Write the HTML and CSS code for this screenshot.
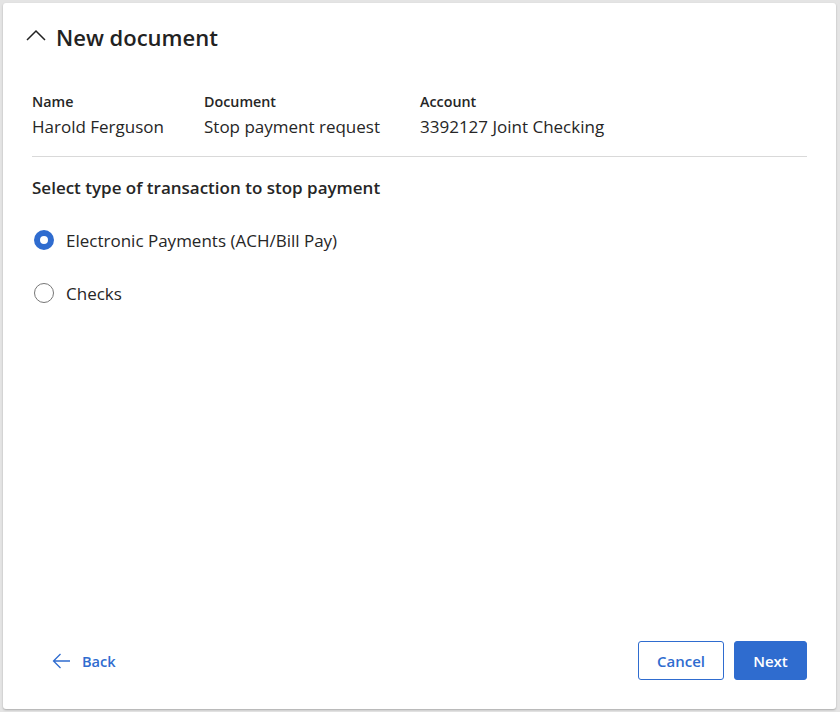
FILE: index.html
```html
<!DOCTYPE html>
<html>
<head>
<meta charset="utf-8">
<link rel="stylesheet" href="styles.css">
</head>
<body>
<div class="card">
  <div class="header">
    <svg class="chev" width="20" height="12" viewBox="0 0 20 12"><path d="M1 11 L10 2 L19 11" fill="none" stroke="#222" stroke-width="1.5"/></svg>
    <h1 class="title">New document</h1>
  </div>
  <div class="meta">
    <div class="col col-name">
      <div class="label">Name</div>
      <div class="value">Harold Ferguson</div>
    </div>
    <div class="col col-doc">
      <div class="label">Document</div>
      <div class="value">Stop payment request</div>
    </div>
    <div class="col">
      <div class="label">Account</div>
      <div class="value">3392127 Joint Checking</div>
    </div>
  </div>
  <div class="divider"></div>
  <div class="question">Select type of transaction to stop payment</div>
  <div class="options">
    <label class="option"><span class="radio checked"></span><span class="opt-text">Electronic Payments (ACH/Bill Pay)</span></label>
    <label class="option"><span class="radio"></span><span class="opt-text">Checks</span></label>
  </div>
  <div class="spacer"></div>
  <div class="footer">
    <a class="back">
      <svg width="19" height="16" viewBox="0 0 19 16"><path d="M18 8 H1.5 M8.5 1 L1.5 8 L8.5 15" fill="none" stroke="#2f6ccf" stroke-width="1.3"/></svg>
      <span>Back</span>
    </a>
    <div class="actions">
      <button class="btn btn-outline">Cancel</button>
      <button class="btn btn-primary">Next</button>
    </div>
  </div>
</div>
</body>
</html>
```
FILE: styles.css
```css
html, body {
  margin: 0;
  height: 100%;
}
body {
  background: #e4e4e4;
  padding: 3px 4px 3px 3px;
  box-sizing: border-box;
  font-family: "Open Sans", "Noto Sans", sans-serif;
  color: #262626;
}
.card {
  background: #fff;
  height: 100%;
  border-radius: 3px;
  box-shadow: 0 1px 2px rgba(0,0,0,0.25);
  box-sizing: border-box;
  padding: 0 29px 0 29px;
  display: flex;
  flex-direction: column;
}
.header {
  display: flex;
  align-items: center;
  height: 68px;
}
.chev {
  margin-left: -6px;
  margin-right: 10px;
  margin-top: -4px;
}
.title {
  margin: 0;
  font-size: 22px;
  font-weight: 600;
  color: #222;
}
.meta {
  display: flex;
  margin-top: 21px;
}
.col-name { width: 172px; }
.col-doc { width: 216px; }
.label {
  font-size: 14.3px;
  font-weight: 600;
  line-height: 20px;
  color: #262626;
}
.value {
  font-size: 17px;
  line-height: 24px;
  margin-top: 3px;
  color: #262626;
}
.divider {
  height: 1px;
  background: #d9d9d9;
  margin-top: 17px;
}
.question {
  font-size: 17px;
  font-weight: 600;
  margin-top: 19px;
  line-height: 24px;
}
.options {
  display: flex;
  flex-direction: column;
  gap: 29px;
  margin-top: 28px;
}
.option {
  display: flex;
  align-items: center;
  height: 24px;
}
.radio {
  width: 20px;
  height: 20px;
  box-sizing: border-box;
  border-radius: 50%;
  border: 1.5px solid #777;
  margin-left: 2px;
  margin-right: 12px;
  flex: none;
}
.radio.checked {
  border: 6px solid #2f6ccf;
  background: #fff;
}
.opt-text {
  font-size: 17px;
  color: #262626;
}
.spacer { flex: 1; }
.footer {
  display: flex;
  justify-content: space-between;
  align-items: center;
  height: 39px;
  margin-bottom: 29px;
}
.back {
  display: flex;
  align-items: center;
  gap: 11px;
  margin-left: 20px;
  color: #2f6ccf;
  font-size: 14.6px;
  font-weight: 600;
}
.actions {
  display: flex;
  gap: 10px;
}
.btn {
  height: 39px;
  border-radius: 3px;
  font-family: inherit;
  font-size: 15px;
  font-weight: 600;
  box-sizing: border-box;
}
.btn-outline {
  width: 86px;
  background: #fff;
  border: 1px solid #2f6ccf;
  color: #2f6ccf;
}
.btn-primary {
  width: 73px;
  background: #2f6ccf;
  border: 1px solid #2f6ccf;
  color: #fff;
}
```
